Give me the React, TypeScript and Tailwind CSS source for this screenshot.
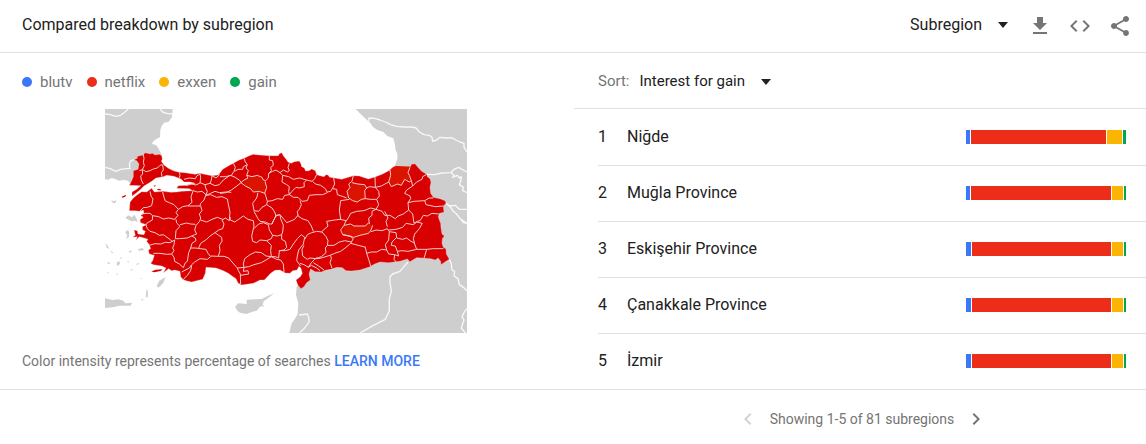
import React, { useState } from 'react';

interface Term {
  name: string;
  dot: string;
}

interface Region {
  name: string;
  shares: number[];
}

const terms: Term[] = [
  { name: 'blutv', dot: 'bg-[#3b78f8]' },
  { name: 'netflix', dot: 'bg-[#ec2d1a]' },
  { name: 'exxen', dot: 'bg-[#fbb400]' },
  { name: 'gain', dot: 'bg-[#00a650]' }
];

const regions: Region[] = [
  { name: 'Niğde', shares: [4, 135, 15, 3] },
  { name: 'Muğla Province', shares: [4, 140, 11, 2] },
  { name: 'Eskişehir Province', shares: [5, 139, 11, 2] },
  { name: 'Çanakkale Province', shares: [5, 139, 11, 2] },
  { name: 'İzmir', shares: [5, 139, 11, 2] }
];

const neighbours = [
  // Bulgaria and Greece
  'M15 15H218L216 40L206 53L192 56L185 66L181 78L180 100L170 104L160 112L156 120L168 123L175 132L186 155L130 170L112 200L98 232L90 238L84 230L72 228L56 230L44 224L35 222L24 227L15 226Z',
  // Georgia down to Syria and Iran
  'M767 15H1101V687H568L575 658L585 644L593 630L595 598L588 573L590 548L620 525L632 495L740 470L950 420L950 250L870 200L885 184L892 165L892 150L886 135L885 122L880 103L862 96L850 84L832 78L818 68L812 58L790 38Z',
  // Cyprus
  'M405 608L415 598L440 600L440 587L485 585L503 576L522 568L508 580L491 592L488 602L494 610L486 606L479 610L470 620L455 624L440 630L420 626L412 620Z',
  // Crete and Rhodes
  'M15 583L38 588L55 586L70 590L76 598L96 596L92 605L60 605L38 610L15 612Z',
  'M170 546L178 530L197 519L190 537L176 551Z',
  // Aegean islands
  'M76 342L84 334L96 340L103 332L110 344L112 354L104 350L94 352Z',
  'M75 384L84 378L88 386L86 400L78 405L82 394Z',
  'M33 289L42 292L49 288L46 298L38 296Z',
  'M15 418L24 426L28 436L20 430Z',
  'M30 438L40 446L36 448Z',
  'M113 436L128 432L132 438L118 440Z',
  'M85 443L96 439L92 446Z',
  'M50 475L58 472L60 480L52 486Z',
  'M20 474L32 477L26 481Z',
  'M60 460L68 462L62 464Z',
  'M82 470L88 474L84 476Z',
  'M48 506L54 510L52 514Z',
  'M22 503L28 506L24 508Z',
  'M90 498L102 494L94 500Z',
  'M108 480L120 476L112 483Z',
  'M120 524L127 521L124 526Z',
  'M140 555L144 562L143 580L137 580Z',
  'M122 587L132 584L126 590Z'
];

const turkey =
  'M102 167L112 163L112 157L130 153L135 146L152 150L156 147L165 153L178 151L185 155L187 165L184 172L192 183L205 193L222 201L238 205L255 206L285 211L300 208L320 212L336 215L355 213L362 204L368 196L390 183L400 178L416 169L432 163L448 155L460 151L478 153L507 155L535 155L538 149L545 146L551 157L558 165L564 174L574 178L583 173L598 171L603 180L605 188L613 192L617 201L627 200L635 195L646 200L650 212L660 215L672 218L678 212L684 213L689 220L700 221L725 226L745 220L760 215L778 216L805 225L825 219L848 210L870 198L878 190L888 186L905 188L932 188L934 181L945 179L955 191L965 202L980 211L982 218L990 224L993 235L990 250L992 268L1000 280L1020 284L1035 290L1038 298L1030 306L1032 325L1018 328L1015 338L1018 348L1022 358L1023 372L1026 390L1033 396L1027 404L1026 418L1030 430L1038 435L1039 450L1048 466L1038 472L1023 482L1022 472L1014 462L1006 468L992 464L975 463L950 461L942 466L930 473L922 465L900 472L865 476L840 474L824 480L808 489L780 498L755 501L738 500L727 491L711 490L692 496L676 499L664 504L645 503L632 495L627 510L631 528L620 536L612 548L603 554L594 544L588 528L601 518L607 508L603 493L597 487L591 498L578 500L570 508L556 507L540 498L525 499L512 508L493 528L480 528L460 538L425 543L414 537L408 524L396 516L385 508L370 500L348 492L318 490L316 508L308 526L290 530L275 534L258 530L248 526L242 518L240 502L224 498L215 500L206 494L190 506L198 492L185 486L160 482L152 478L158 470L163 454L148 450L145 438L152 434L148 422L140 412L144 406L132 402L118 398L108 408L112 398L98 400L106 394L102 378L112 380L114 390L132 392L136 382L128 378L127 368L139 362L122 356L120 347L130 340L122 334L132 328L130 318L120 322L104 320L88 320L90 295L100 282L112 272L125 263L140 264L148 258L155 253L163 264L190 262L212 265L230 264L245 262L278 260L268 254L230 253L235 245L262 244L286 238L270 234L252 234L244 226L222 217L200 214L190 218L168 222L155 232L142 240L132 246L122 256L108 268L96 276L96 264L110 256L122 245L88 244L96 228L100 218L100 200L114 196L117 180L110 170Z';

const borders = [
  'M130 153L132 163L130 175L133 185L127 197L118 200',
  'M127 197L128 210L122 216L124 228L130 240',
  'M128 197L138 203L150 200L160 195L172 192L180 184L187 182',
  'M188 182L190 198L184 206L186 218',
  'M238 205L240 214L237 224',
  'M252 226L268 222L286 224L290 216L300 210',
  'M300 208L302 222L300 236L315 242L330 238L334 228L336 215L348 222L359 212',
  'M258 244L275 240L288 243L302 236',
  'M330 238L345 245L358 242L370 228L390 214L402 218L418 228L424 236',
  'M150 262L153 276L159 285L155 305L142 310L130 311L120 321',
  'M188 264L192 280L196 291L208 296L222 302L235 316L248 308L264 305L276 295L273 278L280 259',
  'M280 260L292 264L306 262L318 272L312 288L302 298L300 306L284 306L264 306',
  'M315 242L317 252L322 262L318 274L332 268L345 262L358 266L378 264L394 265',
  'M318 274L332 272L350 280L366 278L382 285L386 306',
  'M126 330L138 328L150 328L158 335L176 338L190 345L206 342L224 346L234 334L228 326L235 316',
  'M158 335L157 348L140 358L138 363L142 374L150 382L165 386L178 394L190 392L204 402L218 413',
  'M302 306L306 320L298 330L302 342L299 352L288 364L284 378L290 390L275 396L262 402L238 404L226 404L228 380L240 367L230 357L228 346',
  'M240 362L260 357L272 360L286 361',
  'M148 424L165 419L182 420L196 415L210 416L224 408L222 422L218 432L222 440L215 450L200 451L180 448L160 448',
  'M215 450L222 460L224 472L238 480L250 491L256 476L262 472L266 446L272 432L286 432L300 434L318 436L324 448L332 458L322 466L300 464L284 474L275 482L268 492L245 504',
  'M275 484L272 500L262 514L250 526',
  'M275 396L286 402L288 410L276 418L272 432',
  'M296 432L302 418L320 406L330 396L345 386L356 394L365 400L366 412L358 424L360 440L355 457L332 456',
  'M345 386L356 378L368 374L372 360L366 348L376 342L388 350L392 340',
  'M302 348L320 354L336 346L352 340L368 346',
  'M355 457L372 457L386 462L396 474L412 492L415 500L421 510L422 540',
  'M400 178L406 190L402 202L394 214L376 218L360 218',
  'M432 163L436 174L442 182L430 188L428 196L414 196L404 202',
  'M442 182L438 192L445 200L440 214L444 222L432 228L423 236',
  'M440 214L456 218L472 214L486 220L490 228L497 230L505 222L506 208L514 200L512 190L520 184L518 170L508 168L508 155',
  'M423 236L408 248L394 258L378 266L360 268',
  'M423 236L436 246L452 254L460 264L478 262L494 268L500 250L495 232',
  'M506 208L518 202L528 198L540 206L550 198L562 204L568 200L564 190L568 178',
  'M540 206L548 214L546 234L560 242L568 248L566 262L568 272L554 274L548 286L532 284L516 290L502 292L498 278L494 266',
  'M548 214L566 218L580 226L598 222L620 228L612 236L613 248L598 252L588 250L576 262L568 272',
  'M620 228L636 232L644 224L650 212',
  'M638 232L646 240L662 244L676 254L682 266L668 272L648 272L628 274L622 290L606 292L594 280L580 280L568 272',
  'M682 264L692 262L698 252L704 240L701 222',
  'M698 254L710 256L712 272L730 278L740 282',
  'M600 290L604 302L598 316L592 322L594 334L584 346L570 352L560 356L552 346L540 332L528 336',
  'M474 266L470 282L458 298L462 320L476 322L486 310L500 302L502 292',
  'M500 302L516 312L524 324L528 336L520 350L516 360L508 360L496 354L480 352L474 344L462 322',
  'M386 306L390 324L388 346L404 354L416 346L430 336L444 346L460 350L462 366L455 396L458 412L470 416L480 408L500 410L514 404L518 394L508 378L505 362L490 356L476 360L462 374',
  'M516 360L528 334L540 332L542 344L550 364L548 384L545 392L532 396L518 394',
  'M592 334L606 344L624 350L634 366L640 382M720 346L704 348L680 352L684 366L664 384M748 286L722 290L718 318L722 346',
  'M500 410L514 424L512 440L514 458L526 458L536 462L538 440L552 438L560 430L556 412L545 406L545 392',
  'M514 458L498 456L484 446L466 444L450 452L434 464L430 480L432 490L446 488L462 482L484 476L498 468L514 458M412 492L432 490L430 502L444 500L446 510L422 514',
  'M514 458L530 466L542 468L550 480L552 504',
  'M538 440L556 440L570 436L580 420L592 404L604 392L614 400L610 420L596 438L592 456L590 470L602 486',
  'M614 406L622 392L635 386L650 382L666 384L678 398L684 410L682 424L676 432L678 446L664 458L648 464L630 462L622 466L608 456L606 436L612 424',
  'M600 478L612 482L625 490L634 476L644 466L652 460',
  'M625 490L634 484L650 492L660 500M640 476L656 486L672 498',
  'M650 464L664 462L690 454L704 448L722 442L738 430L752 418L798 430',
  'M692 454L694 464L690 476L696 492',
  'M682 424L702 424L718 414L734 410L754 414',
  'M720 346L738 350L732 364L722 378L728 392L752 398L760 404L752 418',
  'M760 215L756 232L746 240L750 250L741 262L746 282L758 290L772 294L784 286L796 284L812 286L830 286L838 276L836 262L826 250L808 248L800 252L794 260L796 284',
  'M756 236L774 240L794 242L800 252M825 219L826 250L844 246L866 234L872 214L870 198',
  'M866 234L874 248L892 240L904 244L914 226L928 234L934 230L928 214L924 206L930 190',
  'M934 230L938 246L920 258L914 268L930 276L932 284L924 296L926 318L938 330L942 358L952 352L960 350L970 334L982 336L996 328L1016 330',
  'M938 246L950 234L966 226L968 218L980 211',
  'M924 296L942 292L974 290L978 302L1006 308L1030 306M974 290L988 282L1000 282',
  'M830 286L836 302L828 316L812 312L792 320L770 322L752 328L746 340L738 352',
  'M926 318L910 330L894 336L886 344L870 334L854 334L846 322L828 316L816 322L816 334L806 342L808 360M854 322L864 342L858 352L862 368',
  'M732 364L752 360L762 366L780 366L796 366L806 356',
  'M728 392L752 396L760 400L780 394L806 388L813 378L818 364M813 383L828 378L846 380L862 374L868 383L866 408L856 422L860 438L845 436L830 444L814 444L800 448L796 430',
  'M800 448L806 466L812 486',
  'M868 383L888 386L890 400L876 414L874 424L886 426L892 442L906 440L924 442L950 436L944 420L940 404L944 390L958 374L967 358L950 354L940 362L918 358L908 370L888 376L866 378',
  'M890 402L908 406L920 402L930 410L944 418M860 438L866 450L884 452L896 456L892 442M884 452L882 466L888 474',
  'M950 436L980 436L976 450L972 462M980 436L1000 434L1030 434'
];

const foreignBorders = [
  'M15 30L32 32L46 37L62 34L72 26L85 15M180 15L188 24L200 28L217 30',
  'M15 190L30 194L48 202L62 196L78 194L90 194L88 180L93 170L102 167',
  'M805 55L807 42L824 43L840 48L856 54L872 62L890 67L912 69L936 69L948 72L958 84L972 92L988 94L996 100L998 112L1010 108L1020 100L1040 102L1054 101L1068 108L1080 114L1092 118L1092 130L1101 144',
  'M980 211L1004 212L1024 207L1052 206L1062 196L1076 190L1086 196L1101 204M1054 206L1062 214L1058 220L1072 214L1078 222L1084 218L1082 232L1078 242L1090 250L1088 260L1101 266',
  'M1038 298L1050 306L1066 304L1078 316L1101 316M1038 298L1052 310L1060 322L1070 330L1080 344L1101 358',
  'M1048 466L1054 480L1056 498L1064 502L1062 516L1074 524L1078 542L1090 550L1101 560',
  'M1101 614L1094 622L1086 638L1092 648L1084 672L1096 687M1084 348L1090 356L1101 358',
  'M924 474L910 490L900 502L878 510L870 518L870 536L874 562L868 584L868 620L856 646L820 664L780 687',
  'M597 633L622 630L626 640L628 652L620 664L612 674L598 687'
];

// provinces with a slightly weaker lead
const lighterProvinces = [
  'M870 198L888 186L932 188L924 206L932 232L914 226L904 244L892 240L874 248L866 234Z',
  'M756 236L794 242L800 252L794 260L796 284L772 294L746 282L741 262Z',
  'M732 364L762 366L796 366L806 356L818 364L806 388L780 394L728 392Z',
  'M432 230L456 218L472 214L490 228L497 240L494 266L460 264L436 246Z'
];

const SubregionMap: React.FC = () => (
  <svg
    viewBox="15 15 1086 672"
    role="img"
    aria-label="Interest by subregion"
    className="mx-auto block w-[362px] max-w-full"
    strokeLinejoin="round"
  >
    <g fill="#cecece">
      {neighbours.map((d) => (
        <path key={d} d={d} />
      ))}
    </g>
    <g fill="none" stroke="#f8f8f8" strokeWidth="4">
      {foreignBorders.map((d) => (
        <path key={d} d={d} />
      ))}
    </g>
    <path d={turkey} fill="#d80000" stroke="#f6dcdc" strokeWidth="1" />
    <g fill="#db1400">
      {lighterProvinces.map((d) => (
        <path key={d} d={d} />
      ))}
    </g>
    <g fill="#d80000">
      <path d="M65 278L78 272L76 278L67 281Z" />
      <path d="M171 255L181 255L184 259L174 259Z" />
      <path d="M160 245L168 244L164 248Z" />
      <path d="M154 502L168 497L188 496L182 501L162 505Z" />
    </g>
    <g fill="none" stroke="#f7caca" strokeWidth="3">
      {borders.map((d) => (
        <path key={d} d={d} />
      ))}
    </g>
  </svg>
);

interface IconProps {
  path: string;
}

const Icon: React.FC<IconProps> = ({ path }) => (
  <svg viewBox="0 0 24 24" className="block size-6" fill="currentColor" aria-hidden="true">
    <path d={path} />
  </svg>
);

interface DropdownProps {
  label: string;
  options: string[];
}

const Dropdown: React.FC<DropdownProps> = ({ label, options }) => (
  <span className="flex items-center gap-4">
    <select
      aria-label={label}
      className="appearance-none bg-transparent text-[#212121] outline-none [field-sizing:content]"
    >
      {options.map((option) => (
        <option key={option}>{option}</option>
      ))}
    </select>
    <svg viewBox="0 0 10 6" className="w-[10px]" fill="#212121" aria-hidden="true">
      <path d="M0 0H10L5 6Z" />
    </svg>
  </span>
);

const actions = [
  { label: 'Download', path: 'M19 9h-4V3H9v6H5l7 7 7-7zM5 18v2h14v-2H5z' },
  {
    label: 'Embed',
    path: 'M9.4 16.6L4.8 12l4.6-4.6L8 6l-6 6 6 6 1.4-1.4zm5.2 0l4.6-4.6-4.6-4.6L16 6l6 6-6 6-1.4-1.4z'
  },
  {
    label: 'Share',
    path: 'M18 16.08c-.76 0-1.44.3-1.96.77L8.91 12.7c.05-.23.09-.46.09-.7s-.04-.47-.09-.7l7.05-4.11c.54.5 1.25.81 2.04.81 1.66 0 3-1.34 3-3s-1.34-3-3-3-3 1.34-3 3c0 .24.04.47.09.7L8.04 9.81C7.5 9.31 6.79 9 6 9c-1.66 0-3 1.34-3 3s1.34 3 3 3c.79 0 1.5-.31 2.04-.81l7.12 4.16c-.05.21-.08.43-.08.65 0 1.61 1.31 2.92 2.92 2.92s2.92-1.31 2.92-2.92-1.31-2.92-2.92-2.92z'
  }
];

const App: React.FC = () => {
  const [page, setPage] = useState(0);

  return (
    <div className="bg-white font-[Roboto,sans-serif] text-base text-[#212121]">
      <header className="flex h-[53px] items-center justify-between border-b border-[#e0e0e0] pr-[14px] pb-[2px] pl-[22px]">
        <h1>Compared breakdown by subregion</h1>
        <div className="flex items-center gap-5">
          <Dropdown label="Resolution" options={['Subregion', 'City']} />
          <div className="flex gap-4 pt-[2px] text-[#757575]">
            {actions.map((action) => (
              <button key={action.label} type="button" aria-label={action.label}>
                <Icon path={action.path} />
              </button>
            ))}
          </div>
        </div>
      </header>

      <main className="grid grid-cols-[287fr_286fr]">
        <section className="pt-[17px] text-[#757575]">
          <ul className="flex gap-[14px] px-[22px] text-[15px] leading-6">
            {terms.map((term) => (
              <li key={term.name} className="flex items-center gap-2">
                <span className={`size-[10px] rounded-full ${term.dot}`} />
                {term.name}
              </li>
            ))}
          </ul>
          <div className="pt-[15px] pr-[2px]">
            <SubregionMap />
          </div>
          <p className="px-[22px] pt-[18px] text-sm">
            Color intensity represents percentage of searches{' '}
            <a href="#learn-more" className="font-medium text-[#3b78f8]">
              LEARN MORE
            </a>
          </p>
        </section>

        <section>
          <div className="flex h-14 items-center gap-[10px] border-b border-[#e0e0e0] pt-[2px] pl-6 text-[15px]">
            <span className="text-[#757575]">Sort:</span>
            <Dropdown
              label="Sort"
              options={['Interest for gain', 'Interest for blutv', 'Interest for netflix', 'Interest for exxen']}
            />
          </div>
          <ol className="pl-6">
            {regions.map((region, index) => (
              <li
                key={region.name}
                className="flex h-14 items-center border-y border-t-[#e0e0e0] border-b-transparent pr-5 first:border-t-transparent"
              >
                <span className="w-[29px]">{index + 1}</span>
                <span className="flex-1">{region.name}</span>
                <span className="flex h-[14px] w-40 gap-px">
                  {region.shares.map((share, i) => (
                    <span key={terms[i].name} className={terms[i].dot} style={{ width: share }} />
                  ))}
                </span>
              </li>
            ))}
          </ol>
        </section>
      </main>

      <footer className="grid grid-cols-[287fr_286fr] border-t border-[#e0e0e0]">
        <div className="col-start-2 flex h-[58px] items-center justify-center gap-[10px] pl-1 text-sm text-[#757575]">
          <button
            type="button"
            aria-label="Previous"
            disabled={page === 0}
            onClick={() => setPage(page - 1)}
            className="disabled:text-[#d2d2d2]"
          >
            <Icon path="M15.41 7.41L14 6l-6 6 6 6 1.41-1.41L10.83 12z" />
          </button>
          <span>Showing 1-5 of 81 subregions</span>
          <button type="button" aria-label="Next" onClick={() => setPage(page + 1)}>
            <Icon path="M10 6L8.59 7.41 13.17 12l-4.58 4.59L10 18l6-6z" />
          </button>
        </div>
      </footer>
    </div>
  );
};

export default App;
